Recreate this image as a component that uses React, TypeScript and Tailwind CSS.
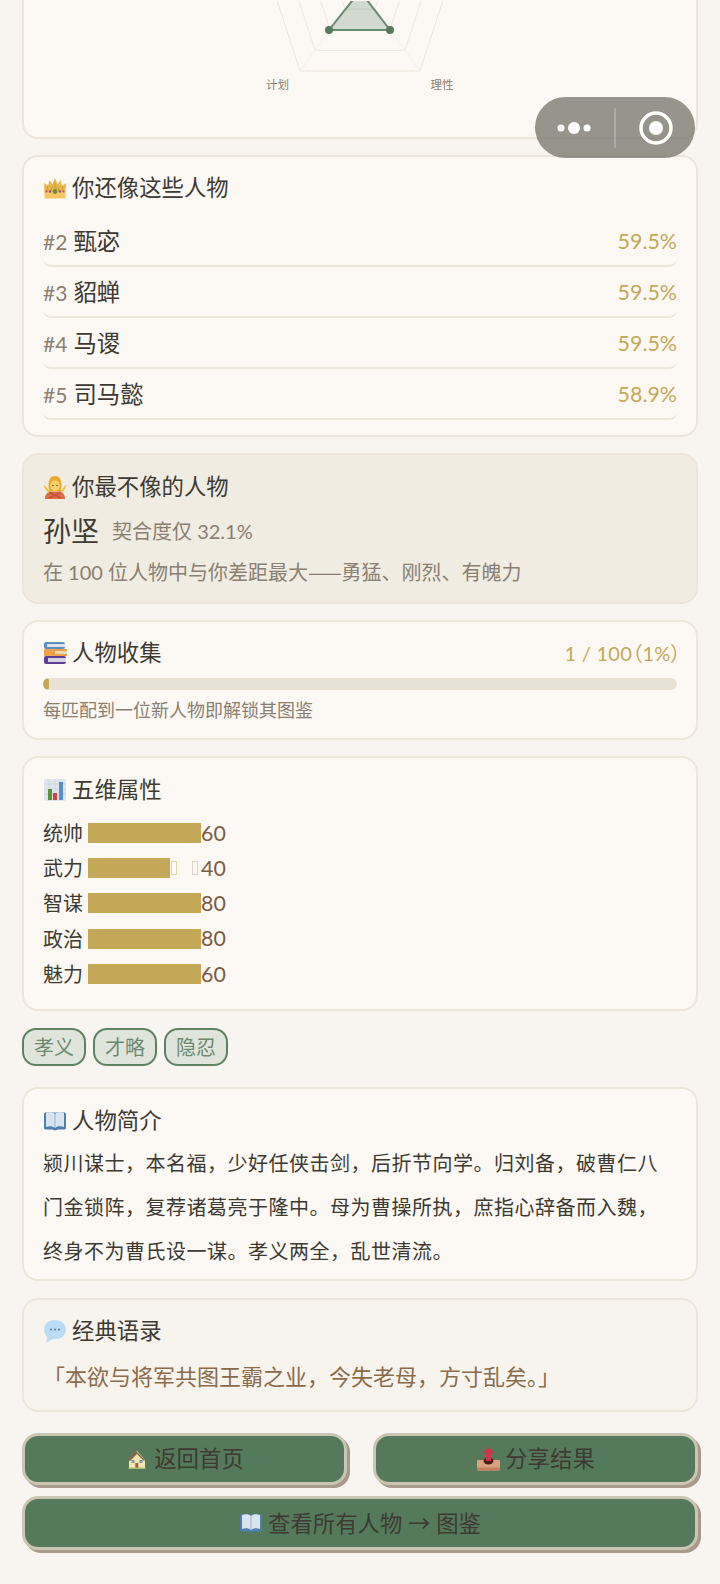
import React from 'react';

const fontStack = "font-['Lato','Noto_Sans_CJK_SC','Noto_Sans',sans-serif]";
const cjk = "font-['Noto_Sans_CJK_SC',sans-serif]";

function Crown() {
  return (
    <svg viewBox="0 0 24 24" className="h-[24px] w-[24px] shrink-0">
      <path d="M1.500 17 1 7l4 3 1.500-6 3 4.500L12 2l2.500 6.500 3-4.500L19 10l4-3-.5 10z" fill="#e8b64c" />
      <path d="M4 15 5 9M8 15l1.500-5M12 15V6M16 15l-1.500-5M20 15l-1-6" stroke="#d0962f" strokeWidth=".8" />
      <rect x="1.500" y="15" width="21" height="7.500" fill="#f6c667" />
      <circle cx="12" cy="15.500" r="2.400" fill="#6e8f3a" />
      <circle cx="7" cy="15.500" r="1.200" fill="#9c3f9c" />
      <circle cx="17" cy="15.500" r="1.200" fill="#9c3f9c" />
      <circle cx="3.500" cy="15.500" r="1" fill="#c2433f" />
      <circle cx="20.500" cy="15.500" r="1" fill="#c2433f" />
    </svg>
  );
}

function Person() {
  return (
    <svg viewBox="0 0 24 24" className="h-[24px] w-[24px] shrink-0">
      <path d="M2 24c0-4 1.500-6 5-7.500h10c3.500 1.500 5 3.500 5 7.500z" fill="#dd6b46" />
      <path d="M6 17 18 23M18 17 6 23" stroke="#c4553a" strokeWidth="1.800" />
      <path d="M1.500 10c1.500 2 3 4 5.500 6l-1.500 2C3.500 16 2 14 .5 11zM22.500 10c-1.500 2-3 4-5.500 6l1.500 2c2-2 3.500-4 5-7z" fill="#f3c04e" />
      <path d="M5.500 11C5.500 4 8 1 12 1s6.500 3 6.500 10c0 2-.5 4-1 5h-11c-.5-1-1-3-1-5z" fill="#e9a92f" />
      <ellipse cx="12" cy="10.500" rx="4.800" ry="5.300" fill="#f8d26a" />
      <circle cx="10" cy="10.500" r=".8" fill="#6a4a20" />
      <circle cx="14" cy="10.500" r=".8" fill="#6a4a20" />
    </svg>
  );
}

function Books() {
  return (
    <svg viewBox="0 0 24 24" className="h-[24px] w-[24px] shrink-0">
      <rect x="1" y="1" width="21" height="7" rx="2" fill="#5b8fc2" />
      <rect x="4" y="3" width="18" height="3" fill="#dfe3e6" />
      <rect x="1" y="8" width="23" height="7" rx="1" fill="#f0a04b" />
      <rect x="12" y="10" width="12" height="3" fill="#e8d9b5" />
      <rect x="1" y="15" width="22" height="8" rx="2" fill="#5f3d96" />
      <rect x="5" y="17" width="18" height="4" fill="#d9d6e4" />
    </svg>
  );
}

function Chart() {
  return (
    <svg viewBox="0 0 24 24" className="h-[24px] w-[24px] shrink-0">
      <rect x="1" y="1" width="22" height="22" rx="2" fill="#dfe6ea" />
      <path d="M1 6h22M1 11h22M1 16h22M6 1v22M12 1v22M18 1v22" stroke="#c8d2da" strokeWidth=".6" />
      <rect x="5" y="11" width="4" height="11" fill="#5c913b" />
      <rect x="10" y="15" width="4" height="7" fill="#c9434a" />
      <rect x="16" y="4" width="4" height="18" fill="#5b8fc9" />
    </svg>
  );
}

function OpenBook() {
  return (
    <svg viewBox="0 0 24 24" className="h-[24px] w-[24px] shrink-0">
      <path d="M1 5c0-1 1-1.500 2-1.500h18c1 0 2 .5 2 1.500v14c0 1-1 1.500-2 1.500h-6c-1 0-2 1-3 1s-2-1-3-1H3c-1 0-2-.5-2-1.500z" fill="#4f7fae" />
      <path d="M3 4c3-1 7-1 9 1 2-2 6-2 9-1v14c-3-1-7-1-9 1-2-2-6-2-9-1z" fill="#d8e5f0" />
      <path d="M12 5v14" stroke="#9ab3c8" strokeWidth="1" />
    </svg>
  );
}

function Bubble() {
  return (
    <svg viewBox="0 0 24 24" className="h-[24px] w-[24px] shrink-0">
      <path d="M12 1C5.500 1 1 5 1 10.500c0 3.500 1.800 6 3.500 7.500L3 24l7-4c.7.100 1.300.100 2 .100 6.500 0 11-4 11-9.600S18.500 1 12 1z" fill="#bcdcf5" />
      <circle cx="8" cy="10.500" r="1.100" fill="#5a7d99" />
      <circle cx="12" cy="10.500" r="1.100" fill="#5a7d99" />
      <circle cx="16" cy="10.500" r="1.100" fill="#5a7d99" />
    </svg>
  );
}

function House() {
  return (
    <svg viewBox="0 0 24 24" className="h-[24px] w-[24px] shrink-0">
      <path d="M4 13 12 4l8 9v8H4z" fill="#f7e7ad" />
      <path d="M3 13 9 4l3 1 8 8-1 1-7-7-7 7z" fill="#7b6a4c" />
      <rect x="6.500" y="13" width="3" height="3" fill="#7f95aa" />
      <rect x="14.500" y="13" width="3" height="3" fill="#7f95aa" />
      <rect x="10.300" y="16" width="3" height="5" fill="#b0574f" />
      <rect x="3.500" y="20.500" width="17" height="1.500" fill="#a9c46c" />
    </svg>
  );
}

function Outbox() {
  return (
    <svg viewBox="0 0 24 24" className="h-[24px] w-[24px] shrink-0">
      <rect x="1" y="13" width="23" height="10.500" rx="1" fill="#dca27f" />
      <rect x="1" y="20.500" width="23" height="3" rx="1" fill="#c5805f" />
      <ellipse cx="12.500" cy="14" rx="5" ry="3.500" fill="#4a1f18" />
      <path d="M12.500 0 18 6h-3v8h-5V6H7z" fill="#d3324a" />
    </svg>
  );
}

function Title({ icon, children }: { icon: React.ReactNode; children: React.ReactNode }) {
  return (
    <div className="flex h-[30px] items-center gap-[5px] text-[22.4px] text-[#3d3a32]">
      {icon}
      <span>{children}</span>
    </div>
  );
}

const cardClass = 'rounded-[16px] border-2 border-[#ebe5da] px-[19px]';

const others = [
  { rank: '#2', name: '甄宓', pct: '59.5%' },
  { rank: '#3', name: '貂蝉', pct: '59.5%' },
  { rank: '#4', name: '马谡', pct: '59.5%' },
  { rank: '#5', name: '司马懿', pct: '58.9%' },
];

const stats = [
  { label: '统帅', value: 60 },
  { label: '武力', value: 40 },
  { label: '智谋', value: 80 },
  { label: '政治', value: 80 },
  { label: '魅力', value: 60 },
];

function ActionButton({ children, className = '' }: { children: React.ReactNode; className?: string }) {
  return (
    <button
      type="button"
      className={`flex items-center justify-center gap-[5px] rounded-[16px] border-[3px] border-[#cbc6b1] bg-[#557a5b] text-[22.4px] text-[#3d3a32] shadow-[3px_3px_0_#a89a8a] ${className}`}
    >
      {children}
    </button>
  );
}

function Radar() {
  return (
    <svg viewBox="0 0 720 100" className="absolute bottom-[36px] left-[-24px] h-[100px] w-[720px]">
      {[102, 76.5, 51, 25.500].map((r) => {
        const pts = [0, 72, 144, 216, 288]
          .map((a) => {
            const t = (a * Math.PI) / 180;
            return `${360 + r * Math.sin(t)},${-12.5 - r * Math.cos(t)}`;
          })
          .join(' ');
        return <polygon key={r} points={pts} fill="none" stroke="#ece7dd" strokeWidth="1" />;
      })}
      <path d="M360 -12.500 300 70M360 -12.500 420 70" stroke="#f2eee6" strokeWidth="1" />
      <polygon points="360,-10 390,29 329,29" fill="#557a5b" fillOpacity="0.25" stroke="#6b8a70" strokeWidth="2" />
      <circle cx="329" cy="29" r="4" fill="#557a5b" />
      <circle cx="390" cy="29" r="4" fill="#557a5b" />
      <text x="277.500" y="87.500" textAnchor="middle" fontSize="11.500" fill="#8a7f70">计划</text>
      <text x="442" y="87.500" textAnchor="middle" fontSize="11.500" fill="#8a7f70">理性</text>
    </svg>
  );
}

export default function App() {
  return (
    <div className={`h-[1584px] overflow-hidden bg-[#f8f5f0] ${fontStack}`}>
      <div className="relative -mt-[60px] flex flex-col gap-[16px] px-[22px]">
        <div className={`${cardClass} relative h-[199px] bg-[#fcf9f4]`}>
          <Radar />
        </div>

        <div className={`${cardClass} bg-[#fcf9f4] pb-[15px] pt-[16px]`}>
          <Title icon={<Crown />}>你还像这些人物</Title>
          <div className="mt-[13px]">
            {others.map((o) => (
              <div key={o.rank} className="flex h-[51px] items-center justify-between rounded-[8px] border-b-2 border-[#ebe5da] pt-[2px]">
                <div className="flex items-center gap-[6px]">
                  <span className="text-[21px] text-[#8a7f70]">{o.rank}</span>
                  <span className="text-[23.4px] text-[#3d3a32]">{o.name}</span>
                </div>
                <span className="text-[21.4px] text-[#c4a857]">{o.pct}</span>
              </div>
            ))}
          </div>
        </div>

        <div className={`${cardClass} bg-[#f0ece1] pb-[14px] pt-[17px]`}>
          <Title icon={<Person />}>你最不像的人物</Title>
          <div className="mt-[9px] flex h-[40px] items-center gap-[13px]">
            <span className="text-[28px] text-[#3d3a32]">孙坚</span>
            <span className="text-[20px] text-[#8a7f70]">契合度仅 32.1%</span>
          </div>
          <p className="mt-[5px] text-[20px] leading-[32px] text-[#8a7f70]">
            在 100 位人物中与你差距最大<span className={cjk}>——</span>勇猛、刚烈、有魄力
          </p>
        </div>

        <div className={`${cardClass} bg-[#fcf9f4] pb-[14px] pt-[16px]`}>
          <div className="flex items-center justify-between">
            <Title icon={<Books />}>人物收集</Title>
            <span className="-mr-[4px] text-[20px] tracking-[0.3px] text-[#c4a857] [font-feature-settings:'palt']">1 / 100（1%）</span>
          </div>
          <div className="mt-[10px] h-[12px] overflow-hidden rounded-full bg-[#e8e2d6]">
            <div className="h-full w-[6px] rounded-full bg-[#c4a857]" />
          </div>
          <p className="mt-[6px] text-[18px] leading-[28px] text-[#8a7f70]">每匹配到一位新人物即解锁其图鉴</p>
        </div>

        <div className={`${cardClass} bg-[#fcf9f4] pb-[17.5px] pt-[17px]`}>
          <Title icon={<Chart />}>五维属性</Title>
          <div className="mt-[10px] flex flex-col">
            {stats.map((s) => (
              <div key={s.label} className="flex h-[35.3px] items-center">
                <span className="w-[45px] text-[20px] text-[#3d3a32]">{s.label}</span>
                <div className="flex w-[113px] items-center">
                  {s.value === 40 ? (
                    <>
                      <div className="h-[20px] w-[82px] bg-[#c4a857]" />
                      <span className="ml-[1px] h-[14px] w-[6px] border border-[#e2d5a8]" />
                      <span className="ml-[15px] h-[14px] w-[6px] border border-[#ddd6c8]" />
                    </>
                  ) : (
                    <div className="h-[20px] w-full bg-[#c4a857]" />
                  )}
                </div>
                <span className="text-[21.4px] text-[#7a5c44]">{s.value}</span>
              </div>
            ))}
          </div>
        </div>

        <div className="mt-[1px] flex gap-[7px]">
          {['孝义', '才略', '隐忍'].map((t) => (
            <span key={t} className="flex h-[38px] w-[64px] items-center justify-center rounded-[14px] border-2 border-[#5f8265] bg-[#dfe5da] text-[20px] text-[#6b8a70]">
              {t}
            </span>
          ))}
        </div>

        <div className={`${cardClass} mt-[5px] bg-[#fcf9f4] pb-[6px] pt-[17px]`}>
          <Title icon={<OpenBook />}>人物简介</Title>
          <p className="mt-[5px] text-[20px] leading-[44px] tracking-[0.5px] text-[#3d3a32]">
            颍川谋士，本名福，少好任侠击剑，后折节向学。归刘备，破曹仁八门金锁阵，复荐诸葛亮于隆中。母为曹操所执，庶指心辞备而入魏，终身不为曹氏设一谋。孝义两全，乱世清流。
          </p>
        </div>

        <div className={`${cardClass} mt-[1px] bg-[#f7f4ee] pb-[17px] pt-[16px]`}>
          <Title icon={<Bubble />}>经典语录</Title>
          <p className="mt-[15px] text-[22px] leading-[32px] text-[#8b6b4a]">「本欲与将军共图王霸之业，今失老母，方寸乱矣。」</p>
        </div>

        <div className="mt-[5px] flex flex-col gap-[11px]">
          <div className="flex gap-[26px]">
            <ActionButton className="h-[52px] flex-1">
              <House />
              返回首页
            </ActionButton>
            <ActionButton className="h-[52px] flex-1">
              <Outbox />
              分享结果
            </ActionButton>
          </div>
          <ActionButton className="h-[54px] w-full">
            <OpenBook />
            <span>
              查看所有人物 <span className={cjk}>→</span> 图鉴
            </span>
          </ActionButton>
        </div>
      </div>

      {/* wechat mini program capsule */}
      <div className="absolute left-[535px] top-[97px] flex h-[61px] w-[160px] items-center rounded-full bg-[#7d7a72]/80">
        <svg viewBox="0 0 160 61" className="h-full w-full">
          <circle cx="26" cy="31" r="3.500" fill="#fff" />
          <circle cx="39" cy="31" r="6" fill="#fff" />
          <circle cx="52" cy="31" r="3.500" fill="#fff" />
          <path d="M80 11v40" stroke="#fff" strokeOpacity="0.3" strokeWidth="1.500" />
          <circle cx="121" cy="31" r="15" fill="none" stroke="#fff" strokeWidth="3.500" />
          <circle cx="121" cy="31" r="7" fill="#fff" />
        </svg>
      </div>
    </div>
  );
}
